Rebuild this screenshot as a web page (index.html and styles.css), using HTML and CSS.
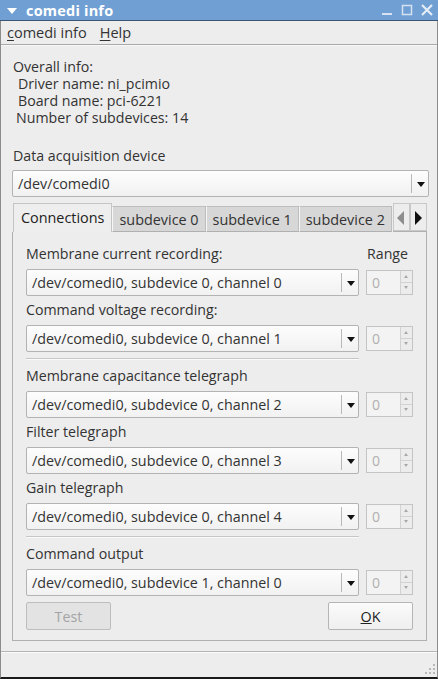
FILE: index.html
```html
<!DOCTYPE html>
<html lang="en">
<head>
    <meta charset="UTF-8">
    <title>comedi info</title>
    <link rel="stylesheet" href="styles.css">
</head>
<body>
    <div class="window">
        <div class="titlebar">
            <span class="title-menu"></span>
            <span class="title-text">comedi info</span>
            <div class="title-buttons">
                <svg width="14" height="14" viewBox="0 0 14 14"><rect x="2" y="10" width="10" height="2" fill="#d6e2f1"/></svg>
                <svg width="14" height="14" viewBox="0 0 14 14"><rect x="2.5" y="2.5" width="9" height="9" fill="none" stroke="#d6e2f1" stroke-width="1.5"/></svg>
                <svg width="14" height="14" viewBox="0 0 14 14"><path d="M2 2 L12 12 M12 2 L2 12" stroke="#e4ecf6" stroke-width="2.2"/></svg>
            </div>
        </div>
        <div class="menubar">
            <span class="menu-item"><u>c</u>omedi info</span>
            <span class="menu-item"><u>H</u>elp</span>
        </div>
        <div class="content">
            <div class="info">
                <div>Overall info:</div>
                <div class="indent2">Driver name: ni_pcimio</div>
                <div class="indent2">Board name: pci-6221</div>
                <div class="indent1">Number of subdevices: 14</div>
            </div>
            <div class="label device-label">Data acquisition device</div>
            <div class="combo wide">
                <span class="combo-text">/dev/comedi0</span>
                <span class="combo-arrow"></span>
            </div>
            <div class="tabbar">
                <div class="tab active">Connections</div>
                <div class="tab">subdevice 0</div>
                <div class="tab">subdevice 1</div>
                <div class="tab">subdevice 2</div>
                <div class="tab-scroll">
                    <span class="scroll-left"></span>
                    <span class="scroll-right"></span>
                </div>
            </div>
            <div class="pane">
                <div class="field">
                    <div class="label">Membrane current recording:</div>
                    <div class="label range">Range</div>
                    <div class="combo"><span class="combo-text">/dev/comedi0, subdevice 0, channel 0</span><span class="combo-arrow"></span></div>
                    <div class="spin"><span>0</span><span class="spin-btns"><i></i><i class="down"></i></span></div>
                </div>
                <div class="field">
                    <div class="label">Command voltage recording:</div>
                    <div></div>
                    <div class="combo"><span class="combo-text">/dev/comedi0, subdevice 0, channel 1</span><span class="combo-arrow"></span></div>
                    <div class="spin"><span>0</span><span class="spin-btns"><i></i><i class="down"></i></span></div>
                </div>
                <div class="separator"></div>
                <div class="field">
                    <div class="label">Membrane capacitance telegraph</div>
                    <div></div>
                    <div class="combo"><span class="combo-text">/dev/comedi0, subdevice 0, channel 2</span><span class="combo-arrow"></span></div>
                    <div class="spin"><span>0</span><span class="spin-btns"><i></i><i class="down"></i></span></div>
                </div>
                <div class="field">
                    <div class="label">Filter telegraph</div>
                    <div></div>
                    <div class="combo"><span class="combo-text">/dev/comedi0, subdevice 0, channel 3</span><span class="combo-arrow"></span></div>
                    <div class="spin"><span>0</span><span class="spin-btns"><i></i><i class="down"></i></span></div>
                </div>
                <div class="field">
                    <div class="label">Gain telegraph</div>
                    <div></div>
                    <div class="combo"><span class="combo-text">/dev/comedi0, subdevice 0, channel 4</span><span class="combo-arrow"></span></div>
                    <div class="spin"><span>0</span><span class="spin-btns"><i></i><i class="down"></i></span></div>
                </div>
                <div class="separator"></div>
                <div class="field">
                    <div class="label">Command output</div>
                    <div></div>
                    <div class="combo"><span class="combo-text">/dev/comedi0, subdevice 1, channel 0</span><span class="combo-arrow"></span></div>
                    <div class="spin"><span>0</span><span class="spin-btns"><i></i><i class="down"></i></span></div>
                </div>
                <div class="buttons">
                    <button class="btn disabled">Test</button>
                    <button class="btn"><u>O</u>K</button>
                </div>
            </div>
        </div>
        <div class="statusbar">
            <svg class="grip" width="14" height="14" viewBox="0 0 14 14" fill="#b9b9b9">
                <rect x="11" y="2" width="2" height="2"/>
                <rect x="7" y="6" width="2" height="2"/><rect x="11" y="6" width="2" height="2"/>
                <rect x="3" y="10" width="2" height="2"/><rect x="7" y="10" width="2" height="2"/><rect x="11" y="10" width="2" height="2"/>
            </svg>
        </div>
    </div>
</body>
</html>
```

FILE: styles.css
```css
body, html {
    margin: 0;
    background-color: #ededed;
    font-family: 'Open Sans', 'DejaVu Sans', sans-serif;
    font-size: 14.2px;
    color: #333333;
}
.window {
    width: 438px;
    height: 679px;
    box-sizing: border-box;
    border-left: 1px solid #8c8c8c;
    border-right: 1px solid #8c8c8c;
    border-bottom: 2px solid #1a1a1a;
    display: flex;
    flex-direction: column;
}
.titlebar {
    height: 20px;
    background-color: #6f9fd3;
    border-bottom: 1px solid #3c5574;
    display: flex;
    align-items: center;
    color: white;
    font-weight: bold;
    font-size: 14.5px;
    margin: 0 -1px;
}
.title-menu {
    width: 0;
    height: 0;
    border-left: 5px solid transparent;
    border-right: 5px solid transparent;
    border-top: 6px solid white;
    margin: 2px 9px 0 7px;
}
.title-text {
    flex-grow: 1;
    letter-spacing: 0.2px;
}
.title-buttons {
    display: flex;
    gap: 6px;
    margin-right: 4px;
}
.menubar {
    height: 23px;
    display: flex;
    align-items: center;
    gap: 13px;
    padding-left: 6px;
    border-bottom: 1px solid #a9a9a9;
    box-shadow: 0 1px 0 #f8f8f8;
    font-size: 14.5px;
}
.menu-item u {
    text-underline-offset: 2px;
}
.content {
    padding: 0 10px 0 11px;
    flex-grow: 1;
}
.info {
    padding-top: 13px;
    line-height: 17px;
    padding-left: 1px;
}
.indent1 {
    padding-left: 3px;
}
.indent2 {
    padding-left: 5px;
}
.label {
    height: 20px;
    line-height: 20px;
    white-space: nowrap;
}
.device-label {
    margin-top: 20px;
    padding-left: 1px;
}
.combo {
    height: 27px;
    box-sizing: border-box;
    border: 1px solid #b3b3b3;
    border-radius: 2px;
    background: linear-gradient(#fdfdfd, #f1f1f1);
    display: flex;
    align-items: center;
}
.combo.wide {
    margin-top: 4px;
    margin-right: -2px;
}
.combo-text {
    flex-grow: 1;
    padding-left: 5px;
    white-space: nowrap;
    font-size: 14.3px;
}
.combo-arrow {
    width: 16px;
    height: 19px;
    border-left: 1px solid #b8b8b8;
    position: relative;
}
.combo-arrow::after {
    content: "";
    position: absolute;
    left: 5px;
    top: 8px;
    border-left: 4px solid transparent;
    border-right: 4px solid transparent;
    border-top: 5px solid #111;
}
.tabbar {
    display: flex;
    margin-top: 6px;
    height: 29px;
    align-items: flex-end;
    padding-left: 1px;
}
.tab {
    height: 26px;
    line-height: 25px;
    box-sizing: border-box;
    padding: 0 6px;
    background-color: #d7d7d7;
    border: 1px solid #bdbdbd;
    border-left: 1px solid #f6f6f6;
    border-bottom: 1px solid #b0b0b0;
    white-space: nowrap;
    font-size: 14.4px;
}
.tab.active {
    height: 29px;
    line-height: 28px;
    background-color: #eeeeee;
    border: 1px solid #c4c4c4;
    border-bottom: none;
    padding: 0 7px;
    color: #222;
}
.tab-scroll {
    display: flex;
    flex-grow: 1;
    height: 29px;
    margin-left: 1px;
    border-bottom: 1px solid #b0b0b0;
    box-sizing: border-box;
}
.tab-scroll span {
    width: 15px;
    border: 1px solid #c8c8c8;
    position: relative;
}
.tab-scroll span::after {
    content: "";
    position: absolute;
    top: 7px;
    border-top: 7px solid transparent;
    border-bottom: 7px solid transparent;
}
.scroll-left::after {
    left: 3px;
    border-right: 7px solid #8e8e8e;
}
.scroll-right::after {
    left: 4px;
    border-left: 7px solid #111;
}
.pane {
    height: 409px;
    box-sizing: border-box;
    border: 1px solid #b0b0b0;
    border-top: none;
    padding: 12px 13px 0 13px;
    display: flex;
    flex-direction: column;
    gap: 4px;
}
.field {
    display: grid;
    grid-template-columns: 1fr 47px;
    column-gap: 7px;
    row-gap: 5px;
}
.range {
    padding-left: 1px;
}
.spin {
    height: 25px;
    margin-top: 1px;
    box-sizing: border-box;
    border: 1px solid #c4c4c4;
    background-color: #f3f3f3;
    color: #b0b0b0;
    display: flex;
    align-items: center;
    padding-left: 5px;
    font-size: 14px;
}
.spin span:first-child {
    flex-grow: 1;
}
.spin-btns {
    width: 11px;
    height: 23px;
    border-left: 1px solid #d2d2d2;
    display: flex;
    flex-direction: column;
}
.spin-btns i {
    flex: 1;
    position: relative;
    background: #ececec;
}
.spin-btns i.down {
    border-top: 1px solid #d2d2d2;
}
.spin-btns i::after {
    content: "";
    position: absolute;
    left: 3px;
    top: 4px;
    border-left: 2px solid transparent;
    border-right: 2px solid transparent;
    border-bottom: 3px solid #a8a8a8;
}
.spin-btns i.down::after {
    top: 3px;
    border-bottom: none;
    border-top: 3px solid #a8a8a8;
}
.separator {
    height: 1px;
    background-color: #c6c6c6;
    box-shadow: 0 1px 0 #fafafa;
    margin: 2px 54px 3px 0;
}
.buttons {
    display: flex;
    justify-content: space-between;
    margin-top: 2px;
}
.btn {
    width: 85px;
    height: 28px;
    font-family: inherit;
    font-size: 14.3px;
    color: #222;
    background: linear-gradient(#fbfbfb, #efefef);
    border: 1px solid #b5b5b5;
    border-radius: 2px;
    cursor: pointer;
}
.btn.disabled {
    color: #a3a3a3;
    background: #e3e3e3;
    border-color: #bdbdbd;
}
.statusbar {
    height: 25px;
    margin-top: 10px;
    border-top: 1px solid #b5b5b5;
    box-shadow: inset 0 1px 0 #fafafa;
    display: flex;
    justify-content: flex-end;
    align-items: flex-end;
}
.grip {
    margin: 0 1px 1px 0;
}
```
